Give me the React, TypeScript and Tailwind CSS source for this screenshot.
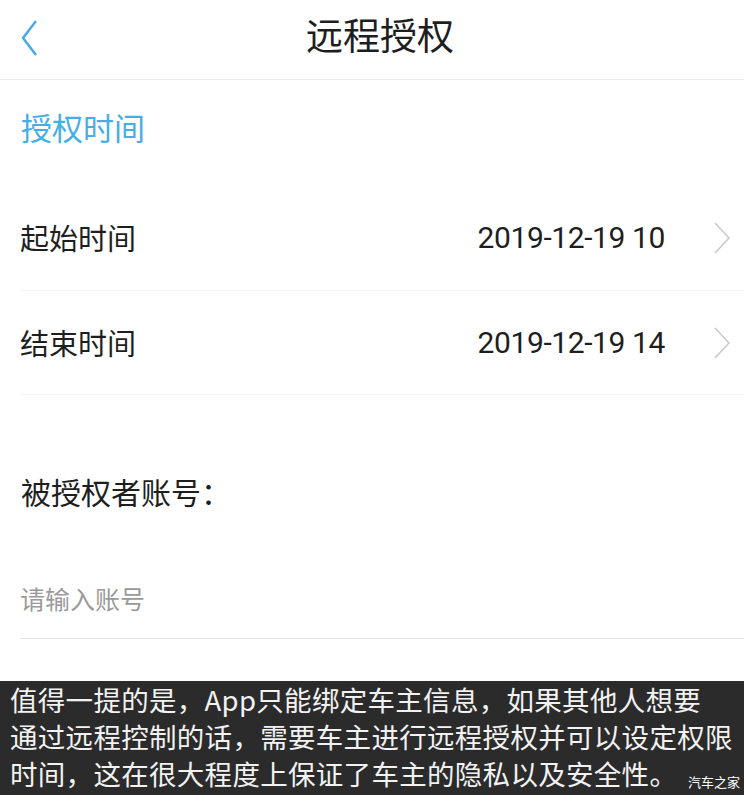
export default function App() {
  const cjk = { fontFamily: '"Noto Sans CJK SC", "Noto Sans", sans-serif' };
  const num = { fontFamily: 'Roboto, "Noto Sans CJK SC", sans-serif' };
  return (
    <div className="w-[744px] h-[795px] bg-white flex flex-col overflow-hidden" style={cjk}>
      {/* header */}
      <div className="relative h-[80px] shrink-0 flex items-center justify-center border-b border-[#ececec]">
        <svg className="absolute left-[20px] top-[18px]" width="20" height="40" viewBox="0 0 20 40">
          <path d="M16 3 L3 20 L16 37" fill="none" stroke="#45a9e8" strokeWidth="2.4" />
        </svg>
        <div className="text-[37px] leading-[44px] text-[#1e1e1e] ml-[16px] -mt-[12px]">远程授权</div>
      </div>

      {/* section title */}
      <div className="h-[95px] shrink-0 flex items-center pl-[21px] text-[31px] text-[#46aee6]">授权时间</div>

      {/* rows */}
      <div className="ml-[20px] mt-[10px] h-[106px] shrink-0 flex items-center border-b border-[#f5f5f5]">
        <div className="flex-1 text-[29px] text-[#1e1e1e]">起始时间</div>
        <div className="text-[30px] tracking-[-0.4px] text-[#1e1e1e] mr-[47px]" style={num}>
          2019-12-19 10
        </div>
        <svg className="mr-[12px]" width="20" height="36" viewBox="0 0 20 36">
          <path d="M3 3 L17 18 L3 33" fill="none" stroke="#cbcbcb" strokeWidth="1.6" />
        </svg>
      </div>
      <div className="ml-[20px] h-[104px] shrink-0 flex items-center border-b border-[#f5f5f5]">
        <div className="flex-1 text-[29px] text-[#1e1e1e]">结束时间</div>
        <div className="text-[30px] tracking-[-0.4px] text-[#1e1e1e] mr-[47px]" style={num}>
          2019-12-19 14
        </div>
        <svg className="mr-[12px]" width="20" height="36" viewBox="0 0 20 36">
          <path d="M3 3 L17 18 L3 33" fill="none" stroke="#cbcbcb" strokeWidth="1.6" />
        </svg>
      </div>

      {/* account */}
      <div className="mt-[40px] h-[112px] shrink-0 flex items-center pl-[21px] text-[30px] text-[#1e1e1e]">被授权者账号：</div>
      <div className="ml-[20px] h-[92px] pt-3 shrink-0 flex items-center border-b border-[#e6e6e6] text-[25px] text-[#9a9a9a]">
        请输入账号
      </div>

      {/* caption */}
      <div className="relative mt-auto h-[114px] shrink-0 bg-[#2b2b2b] px-[10px] text-[27.5px] tracking-[0.3px] leading-[37px] text-[#f2f2f2] whitespace-nowrap">
        <div>值得一提的是，App只能绑定车主信息，如果其他人想要</div>
        <div>通过远程控制的话，需要车主进行远程授权并可以设定权限</div>
        <div>时间，这在很大程度上保证了车主的隐私以及安全性。</div>
        <div className="absolute right-[4px] bottom-[7px] text-[13px] tracking-normal leading-none text-white">汽车之家</div>
      </div>
    </div>
  );
}
